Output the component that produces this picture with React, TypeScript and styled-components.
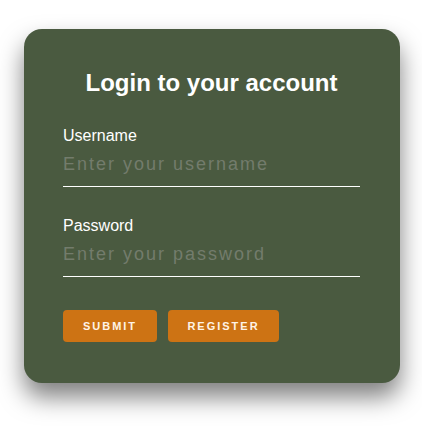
import React from "react";
import styled, { createGlobalStyle } from "styled-components";

const GlobalStyle = createGlobalStyle`
  html, body {
    margin: 0;
    padding: 0;
    background: #ffffff;
    font-family: "Liberation Sans", Arial, sans-serif;
  }
`;

const Page = styled.div`
  display: flex;
  justify-content: flex-start;
  padding: 29px 0 60px 24px;
  min-height: 431px;
  box-sizing: border-box;
`;

const Card = styled.form`
  width: 376px;
  height: fit-content;
  box-sizing: border-box;
  padding: 38px 40px 41px 39px;
  background: #4a5a40;
  border-radius: 18px;
  box-shadow: 0 14px 24px rgba(0, 0, 0, 0.5);
  display: flex;
  flex-direction: column;
`;

const Title = styled.h2`
  margin: 0 0 28px;
  text-align: center;
  color: #ffffff;
  font-size: 24px;
  font-weight: 700;
  line-height: 32px;
`;

const Field = styled.div<{ $gap: number }>`
  display: flex;
  flex-direction: column;
  margin-bottom: ${({ $gap }) => $gap}px;
`;

const Label = styled.label`
  color: #ffffff;
  font-size: 16px;
  line-height: 18px;
`;

const Input = styled.input`
  margin-top: 2px;
  height: 40px;
  border: none;
  border-bottom: 1px solid #ffffff;
  background: transparent;
  padding: 0 0 4px;
  box-sizing: border-box;
  font-family: "Liberation Sans", Arial, sans-serif;
  font-size: 18px;
  letter-spacing: 2px;
  color: #ffffff;
  outline: none;

  &::placeholder {
    color: #737c6c;
  }
`;

const Actions = styled.div`
  display: flex;
  gap: 11px;
`;

const Button = styled.button<{ $w: number }>`
  width: ${({ $w }) => $w}px;
  height: 32px;
  border: none;
  border-radius: 4px;
  background: #cd7314;
  color: #fff3e6;
  font-family: "Liberation Sans", Arial, sans-serif;
  font-size: 11px;
  font-weight: 700;
  letter-spacing: 2px;
  text-transform: uppercase;
  cursor: pointer;
`;

export default function App() {
  return (
    <>
      <GlobalStyle />
      <Page>
        <Card onSubmit={(e) => e.preventDefault()}>
          <Title>Login to your account</Title>
          <Field $gap={30}>
            <Label>Username</Label>
            <Input type="text" placeholder="Enter your username" />
          </Field>
          <Field $gap={33}>
            <Label>Password</Label>
            <Input type="password" placeholder="Enter your password" />
          </Field>
          <Actions>
            <Button $w={94} type="submit">Submit</Button>
            <Button $w={111} type="button">Register</Button>
          </Actions>
        </Card>
      </Page>
    </>
  );
}
